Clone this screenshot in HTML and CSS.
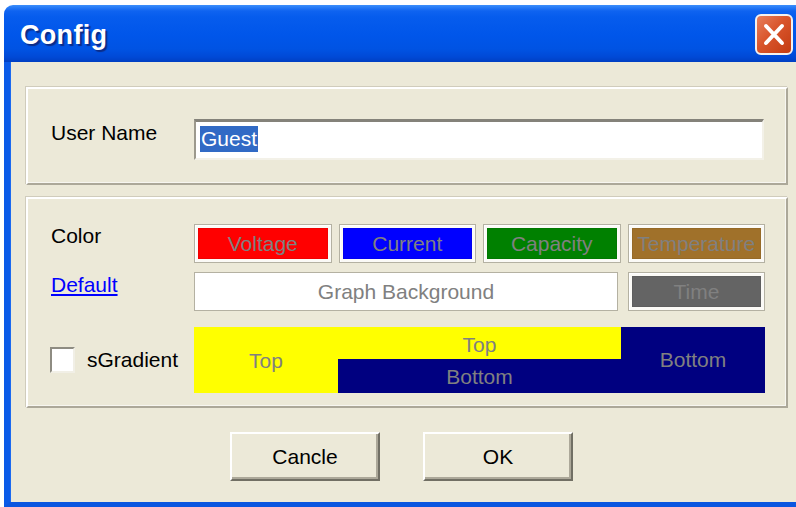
FILE: index.html
```html
<!DOCTYPE html>
<html lang="en">
<head>
<meta charset="utf-8">
<title>Config</title>
<link rel="stylesheet" href="styles.css">
</head>
<body>
<div class="window">
  <div class="titlebar">
    <span class="title">Config</span>
    <div class="close" role="button" aria-label="Close">
      <svg width="38" height="41" viewBox="0 0 38 41">
        <defs>
          <linearGradient id="closeFill" x1="0" y1="0" x2="1" y2="1">
            <stop offset="0" stop-color="#e8825f"/>
            <stop offset="0.45" stop-color="#d9552c"/>
            <stop offset="1" stop-color="#c23a10"/>
          </linearGradient>
        </defs>
        <rect x="1" y="1" width="36" height="39" rx="5" ry="5" fill="url(#closeFill)" stroke="#f4f1ee" stroke-width="2"/>
        <path d="M11 12 L27 29 M27 12 L11 29" stroke="#ffffff" stroke-width="4" stroke-linecap="round"/>
      </svg>
    </div>
  </div>
  <div class="client">
    <div class="group group-user">
      <span class="label label-user">User Name</span>
      <div class="textbox"><span class="selected">Guest</span></div>
    </div>

    <div class="group group-color">
      <span class="label label-color">Color</span>
      <div class="swatch-row">
        <div class="swatch"><div class="fill fill-red">Voltage</div></div>
        <div class="swatch"><div class="fill fill-blue">Current</div></div>
        <div class="swatch"><div class="fill fill-green">Capacity</div></div>
        <div class="swatch"><div class="fill fill-brown">Temperature</div></div>
      </div>

      <a class="label link" href="#">Default</a>
      <div class="swatch-row swatch-row-2">
        <div class="swatch"><div class="fill fill-white">Graph Background</div></div>
        <div class="swatch"><div class="fill fill-gray">Time</div></div>
      </div>

      <label class="check">
        <span class="check-box"></span>
        <span class="check-text">sGradient</span>
      </label>
      <div class="gradient">
        <div class="grad-left">Top</div>
        <div class="grad-mid">
          <div class="grad-top">Top</div>
          <div class="grad-bottom">Bottom</div>
        </div>
        <div class="grad-right">Bottom</div>
      </div>
    </div>

    <div class="buttons">
      <div class="button" role="button">Cancle</div>
      <div class="button" role="button">OK</div>
    </div>
  </div>
</div>
</body>
</html>
```

FILE: styles.css
```css
html, body {
  margin: 0;
  padding: 0;
  background: #ffffff;
  overflow: hidden;
}

body {
  font-family: "Liberation Sans", Arial, sans-serif;
  font-size: 21px;
  color: #000000;
}

/* window frame */
.window {
  margin: 5px 0 0 4px;
  width: 792px;
  height: 502px;
  display: flex;
  flex-direction: column;
}

.titlebar {
  height: 57px;
  flex: none;
  display: flex;
  align-items: center;
  justify-content: space-between;
  border-top-left-radius: 9px;
  background: linear-gradient(to bottom,
    #3d8ffb 0px, #2b7ff8 2px, #0f63f0 6px, #065ced 12px,
    #0056ea 30px, #0053e3 44px, #0049d6 52px, #003fc2 57px);
}

.title {
  margin-left: 16px;
  padding-top: 3px;
  color: #ffffff;
  font-weight: bold;
  font-size: 27px;
  letter-spacing: 0.3px;
  text-shadow: 2px 2px 1px #0b2c88;
}

.close {
  width: 38px;
  height: 41px;
  margin-right: 3px;
  margin-top: 1px;
}

.close svg {
  display: block;
}

.client {
  flex: 1;
  background: #ece9d8;
  border-left: 6px solid #0a5ae8;
  border-bottom: 5px solid #0a56e0;
  box-shadow: inset 1px 0 0 #1c6af0;
  display: flex;
  flex-direction: column;
}

/* etched group boxes */
.group {
  box-sizing: border-box;
  width: 762px;
  margin-left: 16px;
  border-top: 2px solid #ffffff;
  border-left: 2px solid #ffffff;
  border-right: 2px solid #aca899;
  border-bottom: 2px solid #aca899;
  box-shadow: -1px -1px 0 #d0ccbc, inset -1px -1px 0 #f7f6f0;
  display: grid;
  grid-template-columns: 143px 571px;
  padding-left: 23px;
}

.group-user {
  margin-top: 25px;
  height: 98px;
  padding-top: 30px;
  align-items: start;
}

.group-color {
  margin-top: 12px;
  height: 211px;
  padding-top: 25px;
  row-gap: 9px;
  align-content: start;
}

.label {
  line-height: 24px;
  align-self: start;
}

.label-user {
  padding-top: 2px;
}

.link {
  color: #0000ff;
  text-decoration: underline;
  justify-self: start;
  padding-top: 1px;
}

/* sunken text field */
.textbox {
  box-sizing: border-box;
  width: 570px;
  height: 41px;
  background: #ffffff;
  border-top: 3px solid #84827a;
  border-left: 2px solid #9c998d;
  border-right: 2px solid #f3f1e8;
  border-bottom: 2px solid #f3f1e8;
  padding: 4px 0 0 4px;
}

.selected {
  display: inline-block;
  background: #316ac5;
  color: #ffffff;
  line-height: 26px;
  height: 26px;
  padding: 0 1px;
}

/* colour swatches */
.swatch-row {
  display: grid;
  grid-template-columns: repeat(4, 1fr);
  column-gap: 7px;
}

.swatch-row-2 {
  grid-template-columns: 424px 137px;
  column-gap: 10px;
}

.swatch {
  box-sizing: border-box;
  height: 39px;
  border: 1px solid #b4b1a2;
  padding: 3px;
  background: #fbfaf6;
  box-shadow: inset 1px 1px 0 #ffffff;
}

.fill {
  height: 100%;
  display: flex;
  align-items: center;
  justify-content: center;
  color: #808080;
  white-space: nowrap;
  overflow: hidden;
  box-sizing: border-box;
  border: 1px solid rgba(0, 0, 0, 0.06);
}

.fill-red { background: #ff0000; }
.fill-blue { background: #0000ff; }
.fill-green { background: #008000; }
.fill-brown { background: #a0712a; }
.fill-white { background: #ffffff; border-color: #ffffff; }
.fill-gray { background: #646464; }

.swatch:has(.fill-white) {
  background: #ffffff;
}

/* checkbox */
.check {
  display: flex;
  align-items: center;
  gap: 12px;
  margin-top: 7px;
  margin-left: -1px;
}

.check-box {
  box-sizing: border-box;
  width: 25px;
  height: 26px;
  background: #ffffff;
  border-top: 2px solid #8e8c82;
  border-left: 2px solid #8e8c82;
  border-right: 2px solid #f1efe6;
  border-bottom: 2px solid #f1efe6;
}

/* gradient preview */
.gradient {
  margin-top: 7px;
  height: 66px;
  display: grid;
  grid-template-columns: 144px 283px 144px;
  color: #808080;
}

.grad-left {
  background: #ffff00;
  display: flex;
  align-items: center;
  justify-content: center;
  padding-top: 2px;
}

.grad-mid {
  display: grid;
  grid-template-rows: 32px 34px;
}

.grad-top {
  background: #ffff00;
  display: flex;
  align-items: center;
  justify-content: center;
  padding-top: 3px;
}

.grad-bottom {
  background: #000080;
  display: flex;
  align-items: center;
  justify-content: center;
  padding-top: 2px;
}

.grad-right {
  background: #000080;
  display: flex;
  align-items: center;
  justify-content: center;
}

/* dialog buttons */
.buttons {
  margin-top: 24px;
  padding-left: 220px;
  display: flex;
  gap: 43px;
}

.button {
  box-sizing: border-box;
  width: 150px;
  height: 49px;
  display: flex;
  align-items: center;
  justify-content: center;
  background: #ece9d8;
  border-top: 2px solid #ffffff;
  border-left: 2px solid #ffffff;
  border-right: 2px solid #716f64;
  border-bottom: 2px solid #716f64;
  box-shadow: inset -2px -2px 0 #aca899;
}
```
